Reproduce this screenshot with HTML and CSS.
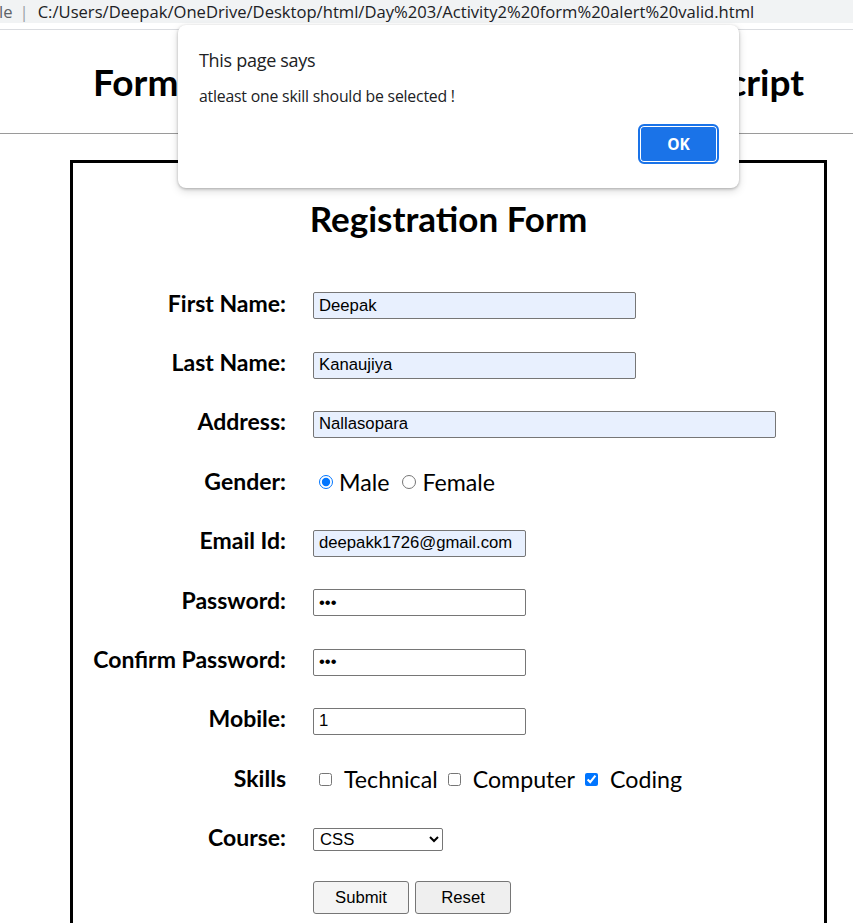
FILE: index.html
```html
<!DOCTYPE html>
<html lang="en">
<head>
<meta charset="utf-8">
<title>Form Validation</title>
<link rel="stylesheet" href="styles.css">
</head>
<body>
<div class="chrome">
  <span class="scheme">le</span><span class="sep">|</span><span class="url">C:/Users/Deepak/OneDrive/Desktop/html/Day%203/Activity2%20form%20alert%20valid.html</span>
</div>
<div class="chrome-gap"></div>
<div class="page">
  <h1 class="title">Form Validation using Alert in Javascript</h1>
  <hr class="rule">
  <div class="card">
    <h2 class="card-title">Registration Form</h2>
    <form class="grid" onsubmit="return false">
      <label class="lbl">First Name:</label>
      <div class="ctl"><input class="field w-md autofill" type="text" value="Deepak"></div>

      <label class="lbl">Last Name:</label>
      <div class="ctl"><input class="field w-md autofill" type="text" value="Kanaujiya"></div>

      <label class="lbl">Address:</label>
      <div class="ctl"><input class="field w-lg autofill" type="text" value="Nallasopara"></div>

      <label class="lbl">Gender:</label>
      <div class="ctl opts">
        <label class="opt radio-opt"><input type="radio" name="g" checked><span>Male</span></label>
        <label class="opt radio-opt"><input type="radio" name="g"><span>Female</span></label>
      </div>

      <label class="lbl">Email Id:</label>
      <div class="ctl"><input class="field w-sm autofill" type="text" value="deepakk1726@gmail.com"></div>

      <label class="lbl">Password:</label>
      <div class="ctl"><input class="field w-sm" type="password" value="123"></div>

      <label class="lbl">Confirm Password:</label>
      <div class="ctl"><input class="field w-sm" type="password" value="123"></div>

      <label class="lbl">Mobile:</label>
      <div class="ctl"><input class="field w-sm" type="text" value="1"></div>

      <label class="lbl">Skills</label>
      <div class="ctl opts">
        <label class="opt chk-opt"><input type="checkbox"><span>Technical</span></label>
        <label class="opt chk-opt"><input type="checkbox"><span>Computer</span></label>
        <label class="opt chk-opt"><input type="checkbox" checked><span>Coding</span></label>
      </div>

      <label class="lbl">Course:</label>
      <div class="ctl ctl-select">
        <select class="select">
          <option>CSS</option>
          <option>HTML</option>
          <option>JavaScript</option>
        </select>
      </div>

      <div class="lbl"></div>
      <div class="ctl btns">
        <button class="btn btn-submit" type="submit">Submit</button>
        <button class="btn btn-reset" type="reset">Reset</button>
      </div>
    </form>
  </div>
</div>

<div class="dialog" role="alertdialog">
  <div class="dlg-title">This page says</div>
  <div class="dlg-msg">atleast one skill should be selected !</div>
  <div class="dlg-actions"><button class="dlg-ok" type="button">OK</button></div>
</div>
</body>
</html>
```

FILE: styles.css
```css
html, body {
  margin: 0;
  padding: 0;
  background: #fff;
  overflow: hidden;
}
body {
  font-family: Lato, "Open Sans", sans-serif;
  color: #000;
  width: 853px;
  height: 923px;
  position: relative;
}

/* browser chrome strip */
.chrome {
  height: 23px;
  background: #f1f3f4;
  display: flex;
  align-items: center;
  font-family: "Open Sans", "Noto Sans", sans-serif;
  font-size: 16.6px;
  white-space: nowrap;
  overflow: hidden;
}
.scheme {
  color: #5f6368;
  margin-left: -1px;
}
.sep {
  color: #9aa0a6;
  margin: 0 9px 0 7px;
}
.url {
  color: #202124;
}
.chrome-gap {
  height: 6px;
  border-bottom: 1px solid #dadce0;
}

/* page */
.page {
  display: flex;
  flex-direction: column;
}
.title {
  margin: 28px 0 0 44px;
  text-align: center;
  font-size: 37px;
  line-height: 48px;
  font-weight: 700;
  white-space: nowrap;
  word-spacing: 11.2px;
}
.rule {
  margin: 27px 0 0;
  border: 0;
  border-top: 1px solid #9a9a9a;
  height: 0;
}
.card {
  margin: 26px 0 0 70px;
  width: 751px;
  height: 800px;
  border: 3px solid #000;
}
.card-title {
  margin: 31px 0 0;
  text-align: center;
  font-size: 35px;
  line-height: 48px;
  font-weight: 700;
}

.grid {
  margin: 34px 0 0;
  display: grid;
  grid-template-columns: 213px 1fr;
  column-gap: 27px;
  grid-auto-rows: 59.4px;
  align-items: center;
}
.lbl {
  text-align: right;
  font-size: 23px;
  font-weight: 700;
  line-height: 27px;
  margin-top: -5px;
}
.ctl {
  display: flex;
  align-items: center;
}
.ctl-select {
  margin-top: -2px;
}

.field {
  box-sizing: border-box;
  height: 27px;
  border: 1px solid #767676;
  border-radius: 2px;
  padding: 0 5px;
  font-family: "Liberation Sans", Arial, sans-serif;
  font-size: 16.7px;
  color: #000;
  background: #fff;
  outline: none;
}
.autofill {
  background: #e8f0fe;
}
.w-md { width: 323px; }
.w-lg { width: 463px; }
.w-sm { width: 213px; }

.opts {
  font-size: 23.2px;
  line-height: 27px;
  margin-top: -3px;
}
.opt {
  display: inline-flex;
  align-items: center;
}
.radio-opt input {
  width: 14px;
  height: 14px;
  margin: 0 6px 0 6px;
  accent-color: #0075ff;
}
.radio-opt + .radio-opt {
  margin-left: 7px;
}
.chk-opt input {
  width: 13px;
  height: 13px;
  margin: 0 12px 0 6px;
  accent-color: #0075ff;
}
.chk-opt + .chk-opt {
  margin-left: 4px;
}

.select {
  box-sizing: border-box;
  width: 130px;
  height: 23px;
  border: 1px solid #767676;
  border-radius: 2px;
  font-family: "Liberation Sans", Arial, sans-serif;
  font-size: 16.7px;
  background: #fff;
  color: #000;
  padding: 0 2px;
}

.btns {
  gap: 6px;
  margin-top: -4px;
}
.btn {
  box-sizing: border-box;
  width: 96px;
  height: 33px;
  border: 1px solid #767676;
  border-radius: 3px;
  font-family: "Liberation Sans", Arial, sans-serif;
  font-size: 16.7px;
  color: #000;
}
.btn-submit { background: #f4f4f4; }
.btn-reset { background: #efefef; }

/* alert dialog overlay */
.dialog {
  position: absolute;
  left: 178px;
  top: 25px;
  width: 561px;
  height: 163px;
  box-sizing: border-box;
  background: #fff;
  border-radius: 8px;
  box-shadow: 0 1px 3px rgba(0,0,0,0.25), 0 3px 8px rgba(0,0,0,0.15);
  padding: 22px 20px 0 21px;
  font-family: "Open Sans", "Noto Sans", sans-serif;
  color: #202124;
  display: flex;
  flex-direction: column;
}
.dlg-title {
  font-size: 18px;
  line-height: 26px;
  letter-spacing: -0.3px;
}
.dlg-msg {
  margin-top: 13px;
  font-size: 15.8px;
  line-height: 20px;
  letter-spacing: -0.2px;
}
.dlg-actions {
  margin-top: 18px;
  display: flex;
  justify-content: flex-end;
}
.dlg-ok {
  box-sizing: border-box;
  width: 81px;
  height: 40px;
  background: #1a73e8;
  color: #fff;
  border: 2px solid #1a73e8;
  border-radius: 6px;
  box-shadow: inset 0 0 0 1px #fff;
  font-family: "Open Sans", "Noto Sans", sans-serif;
  font-weight: 700;
  font-size: 15.5px;
}
```
